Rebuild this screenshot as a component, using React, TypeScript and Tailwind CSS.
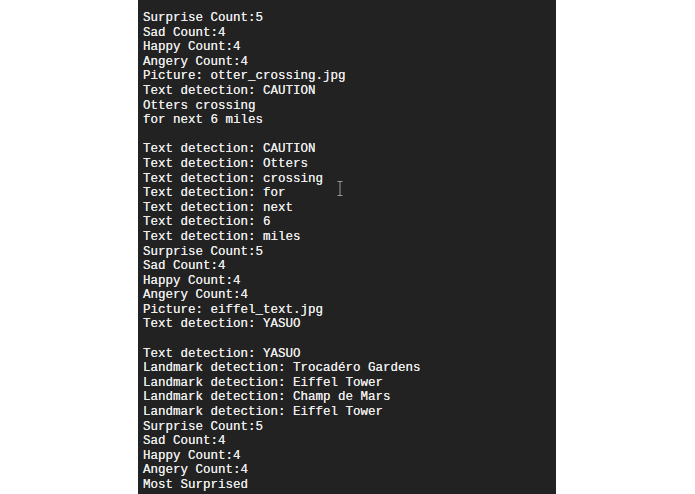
import React from 'react';

const lines: string[] = [
  'Surprise Count:5',
  'Sad Count:4',
  'Happy Count:4',
  'Angery Count:4',
  'Picture: otter_crossing.jpg',
  'Text detection: CAUTION',
  'Otters crossing',
  'for next 6 miles',
  '',
  'Text detection: CAUTION',
  'Text detection: Otters',
  'Text detection: crossing',
  'Text detection: for',
  'Text detection: next',
  'Text detection: 6',
  'Text detection: miles',
  'Surprise Count:5',
  'Sad Count:4',
  'Happy Count:4',
  'Angery Count:4',
  'Picture: eiffel_text.jpg',
  'Text detection: YASUO',
  '',
  'Text detection: YASUO',
  'Landmark detection: Trocadéro Gardens',
  'Landmark detection: Eiffel Tower',
  'Landmark detection: Champ de Mars',
  'Landmark detection: Eiffel Tower',
  'Surprise Count:5',
  'Sad Count:4',
  'Happy Count:4',
  'Angery Count:4',
  'Most Surprised',
];

const App = () => {
  return (
    <div className="flex justify-center h-[494px] w-[695px] bg-white overflow-hidden">
      {/* Console output */}
      <div className="relative ml-[-1px] w-[418px] h-full bg-[#222222] pl-[5px] pt-[11px] overflow-hidden">
        <div className="font-['Courier_New','Liberation_Mono',monospace] text-[12.5px] leading-[14.6px] text-[#ececec] whitespace-pre [text-shadow:0_0_0.3px_#ececec]">
          {lines.map((line, i) => (
            <div key={i} className="h-[14.6px]">
              {line}
            </div>
          ))}
        </div>
        {/* I-beam cursor */}
        <svg
          className="absolute left-[199px] top-[181px]"
          width="6"
          height="15"
          viewBox="0 0 6 15"
        >
          <path d="M0.5 0.5h5M3 0.5v14M0.5 14.5h5" stroke="#9a9a9a" strokeWidth="1" fill="none" />
        </svg>
      </div>
    </div>
  );
};

export default App;
